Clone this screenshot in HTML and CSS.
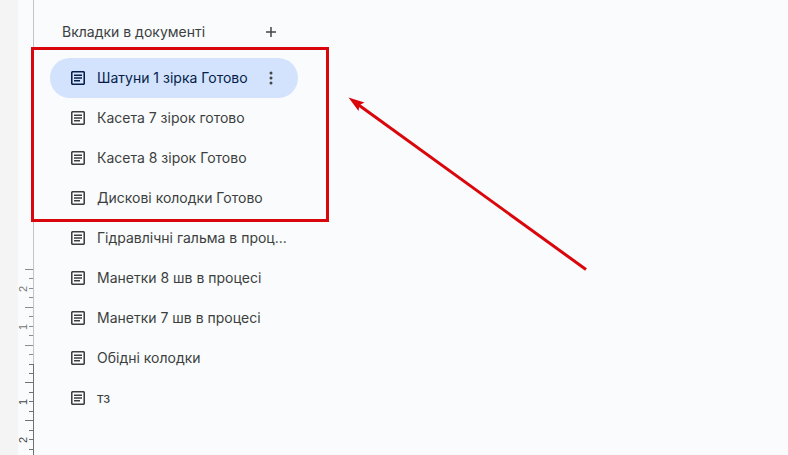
FILE: index.html
```html
<!DOCTYPE html>
<html lang="uk">
<head>
    <meta charset="UTF-8">
    <title>Вкладки в документі</title>
    <link rel="stylesheet" href="styles.css">
</head>
<body>

<svg class="sprite" aria-hidden="true">
    <symbol id="icon-tab" viewBox="0 0 14 14">
        <rect x="0.75" y="0.75" width="12.5" height="12.5" rx="1" fill="none" stroke="currentColor" stroke-width="1.6"/>
        <path d="M3 4.3h8M3 7h8M3 9.7h6" stroke="currentColor" stroke-width="1.5"/>
    </symbol>
</svg>

<div class="app">
    <div class="gutter"></div>

    <!-- Vertical ruler: margin part is light, page part is dark -->
    <svg class="ruler" width="16" height="455" aria-hidden="true">
        <path class="margin-line" d="M15.5 0V364"/>
        <path class="margin-ticks" d="M7 269.5h8M11 278.5h4M11 288.5h4M11 297.5h4M7 307.5h8M11 316.5h4M11 326.5h4M11 335.5h4M7 345.5h8M11 354.5h4"/>
        <path class="page-line" d="M15.5 364V455M11 364.5h4M11 373.5h4M7 382.5h8M11 392.5h4M11 401.5h4M11 411.5h4M7 420.5h8M11 430.5h4M11 439.5h4M11 449.5h4"/>
        <g class="margin-number">
            <text transform="translate(9 289) rotate(-90)">2</text>
            <text transform="translate(9 327) rotate(-90)">1</text>
        </g>
        <g class="page-number">
            <text transform="translate(9 402) rotate(-90)">1</text>
            <text transform="translate(9 440) rotate(-90)">2</text>
        </g>
    </svg>

    <nav class="tabs" aria-labelledby="tabs-title">
        <header class="tabs-header">
            <h2 id="tabs-title">Вкладки в документі</h2>
            <button class="icon-button" type="button" aria-label="Додати вкладку">
                <svg width="12" height="12" viewBox="0 0 12 12"><path d="M6 1v10M1 6h10" stroke="currentColor" stroke-width="1.5"/></svg>
            </button>
        </header>

        <ul class="tab-list">
            <li class="tab active">
                <a href="#tab-1" aria-current="page"><svg class="tab-icon"><use href="#icon-tab"/></svg><span>Шатуни 1 зірка Готово</span></a>
                <button class="icon-button" type="button" aria-label="Параметри вкладки">
                    <svg width="4" height="14" viewBox="0 0 4 14" fill="currentColor"><circle cx="2" cy="2" r="1.5"/><circle cx="2" cy="7" r="1.5"/><circle cx="2" cy="12" r="1.5"/></svg>
                </button>
            </li>
            <li class="tab"><a href="#tab-2"><svg class="tab-icon"><use href="#icon-tab"/></svg><span>Касета 7 зірок готово</span></a></li>
            <li class="tab"><a href="#tab-3"><svg class="tab-icon"><use href="#icon-tab"/></svg><span>Касета 8 зірок Готово</span></a></li>
            <li class="tab"><a href="#tab-4"><svg class="tab-icon"><use href="#icon-tab"/></svg><span>Дискові колодки Готово</span></a></li>
            <li class="tab"><a href="#tab-5"><svg class="tab-icon"><use href="#icon-tab"/></svg><span>Гідравлічні гальма в проц...</span></a></li>
            <li class="tab"><a href="#tab-6"><svg class="tab-icon"><use href="#icon-tab"/></svg><span>Манетки 8 шв в процесі</span></a></li>
            <li class="tab"><a href="#tab-7"><svg class="tab-icon"><use href="#icon-tab"/></svg><span>Манетки 7 шв в процесі</span></a></li>
            <li class="tab"><a href="#tab-8"><svg class="tab-icon"><use href="#icon-tab"/></svg><span>Обідні колодки</span></a></li>
            <li class="tab"><a href="#tab-9"><svg class="tab-icon"><use href="#icon-tab"/></svg><span>тз</span></a></li>
        </ul>
    </nav>
</div>

<!-- Red markup over the finished tabs -->
<svg class="markup" width="600" height="280" aria-hidden="true">
    <rect x="32.5" y="48.5" width="295" height="172" fill="none" stroke="#d9070c" stroke-width="3"/>
    <path d="M358 104.500L586 269.500" stroke="#d9070c" stroke-width="3"/>
    <path d="M348.500 97.500L364.500 102.500L359.500 105L358.500 111Z" fill="#d9070c"/>
</svg>

</body>
</html>
```
FILE: styles.css
```css
* {
    box-sizing: border-box;
}

body {
    margin: 0;
    background: #f9fbfd;
    color: #3c3f3e;
    font-family: Inter, "Liberation Sans", sans-serif;
    font-size: 14px;
    line-height: 20px;
}

.sprite {
    position: absolute;
    width: 0;
    height: 0;
}

.app {
    display: flex;
    min-height: 100vh;
}

.gutter {
    flex: 0 0 18px;
    background: #f4f4f4;
}

/* Ruler */
.ruler {
    flex: none;
    fill: none;
}

.margin-line {
    stroke: #c4c4c4;
}

.margin-ticks {
    stroke: #8c8c8c;
}

.page-line {
    stroke: #707174;
}

.ruler text {
    font-family: "Liberation Sans", sans-serif;
    font-size: 11px;
    text-anchor: middle;
}

.margin-number {
    fill: #777;
}

.page-number {
    fill: #444746;
}

/* Tabs panel */
.tabs {
    flex: 0 1 264px;
    min-width: 0;
    padding: 20px 0 16px 16px;
}

.tabs-header {
    display: flex;
    align-items: center;
    justify-content: space-between;
    height: 24px;
    margin-bottom: 14px;
    padding: 0 15px 0 12px;
}

h2 {
    margin: 0;
    font-size: 14px;
    font-weight: 400;
}

.icon-button {
    display: flex;
    flex: none;
    align-items: center;
    justify-content: center;
    width: 24px;
    height: 24px;
    padding: 0;
    border: 0;
    background: none;
    color: #444746;
    cursor: pointer;
}

.tab-list {
    margin: 0;
    padding: 0;
    list-style: none;
}

.tab {
    display: flex;
    align-items: center;
    height: 40px;
    padding: 0 15px 0 21px;
    border-radius: 20px;
}

.tab.active {
    background: #d3e3fd;
    color: #041e49;
}

.tab a {
    display: flex;
    flex: 1;
    align-items: center;
    gap: 12px;
    color: inherit;
    text-decoration: none;
    white-space: nowrap;
}

.tab-icon {
    flex: none;
    width: 14px;
    height: 14px;
}

.markup {
    position: absolute;
    top: 0;
    left: 0;
    pointer-events: none;
}
```
